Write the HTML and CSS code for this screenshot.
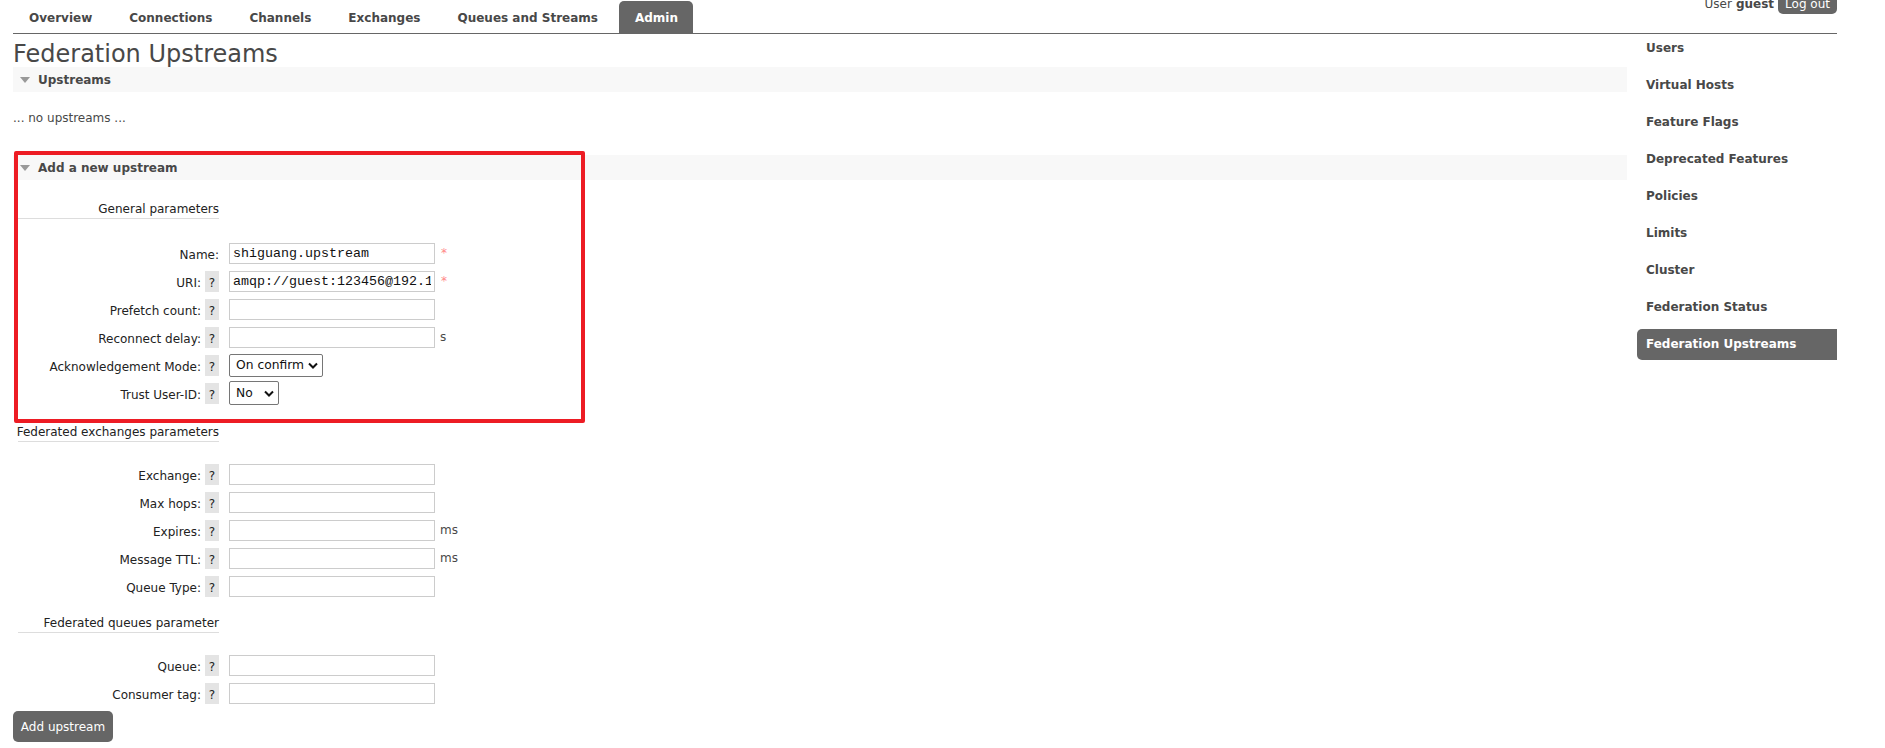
FILE: index.html
```html
<!DOCTYPE html>
<html lang="en">
<head>
    <meta charset="UTF-8">
    <title>RabbitMQ Management: Federation Upstreams</title>
    <link rel="stylesheet" href="styles.css">
</head>
<body>
    <div class="header">
        <ul class="tabs">
            <li><a href="#">Overview</a></li>
            <li><a href="#">Connections</a></li>
            <li><a href="#">Channels</a></li>
            <li><a href="#">Exchanges</a></li>
            <li><a href="#">Queues and Streams</a></li>
            <li class="selected"><a href="#">Admin</a></li>
        </ul>
        <div class="login">
            User <b>guest</b>
            <button class="logout">Log out</button>
        </div>
    </div>

    <div class="main">
        <div class="content">
            <h1>Federation Upstreams</h1>

            <div class="section">
                <h2 class="section-title"><span class="arrow"></span>Upstreams</h2>
                <p class="empty">... no upstreams ...</p>
            </div>

            <div class="section add-section">
                <h2 class="section-title"><span class="arrow"></span>Add a new upstream</h2>

                <form class="form">
                    <div class="group-title first">General parameters</div>

                    <div class="row">
                        <div class="label"><span class="text">Name:</span></div>
                        <input class="field" type="text" value="shiguang.upstream">
                        <span class="mand">*</span>
                    </div>
                    <div class="row">
                        <div class="label"><span class="text">URI:</span><span class="help">?</span></div>
                        <input class="field" type="text" value="amqp://guest:123456@192.168.1.10">
                        <span class="mand">*</span>
                    </div>
                    <div class="row">
                        <div class="label"><span class="text">Prefetch count:</span><span class="help">?</span></div>
                        <input class="field" type="text">
                    </div>
                    <div class="row">
                        <div class="label"><span class="text">Reconnect delay:</span><span class="help">?</span></div>
                        <input class="field" type="text">
                        <span class="unit">s</span>
                    </div>
                    <div class="row">
                        <div class="label"><span class="text">Acknowledgement Mode:</span><span class="help">?</span></div>
                        <span class="select ack">
                            <select class="choice">
                                <option>On confirm</option>
                                <option>On publish</option>
                                <option>No ack</option>
                            </select>
                            <svg class="chevron" width="10" height="7" viewBox="0 0 10 7"><path d="M1 1.5 L5 5.5 L9 1.5" fill="none" stroke="#111" stroke-width="2"/></svg>
                        </span>
                    </div>
                    <div class="row">
                        <div class="label"><span class="text">Trust User-ID:</span><span class="help">?</span></div>
                        <span class="select trust">
                            <select class="choice">
                                <option>No</option>
                                <option>Yes</option>
                            </select>
                            <svg class="chevron" width="10" height="7" viewBox="0 0 10 7"><path d="M1 1.5 L5 5.5 L9 1.5" fill="none" stroke="#111" stroke-width="2"/></svg>
                        </span>
                    </div>

                    <div class="group-title">Federated exchanges parameters</div>

                    <div class="row">
                        <div class="label"><span class="text">Exchange:</span><span class="help">?</span></div>
                        <input class="field" type="text">
                    </div>
                    <div class="row">
                        <div class="label"><span class="text">Max hops:</span><span class="help">?</span></div>
                        <input class="field" type="text">
                    </div>
                    <div class="row">
                        <div class="label"><span class="text">Expires:</span><span class="help">?</span></div>
                        <input class="field" type="text">
                        <span class="unit">ms</span>
                    </div>
                    <div class="row">
                        <div class="label"><span class="text">Message TTL:</span><span class="help">?</span></div>
                        <input class="field" type="text">
                        <span class="unit">ms</span>
                    </div>
                    <div class="row">
                        <div class="label"><span class="text">Queue Type:</span><span class="help">?</span></div>
                        <input class="field" type="text">
                    </div>

                    <div class="group-title last">Federated queues parameter</div>

                    <div class="row">
                        <div class="label"><span class="text">Queue:</span><span class="help">?</span></div>
                        <input class="field" type="text">
                    </div>
                    <div class="row">
                        <div class="label"><span class="text">Consumer tag:</span><span class="help">?</span></div>
                        <input class="field" type="text">
                    </div>

                    <button type="submit" class="submit-btn">Add upstream</button>
                </form>

                <div class="highlight"></div>
            </div>
        </div>

        <ul class="sidebar">
            <li><a href="#">Users</a></li>
            <li><a href="#">Virtual Hosts</a></li>
            <li><a href="#">Feature Flags</a></li>
            <li><a href="#">Deprecated Features</a></li>
            <li><a href="#">Policies</a></li>
            <li><a href="#">Limits</a></li>
            <li><a href="#">Cluster</a></li>
            <li><a href="#">Federation Status</a></li>
            <li class="selected"><a href="#">Federation Upstreams</a></li>
        </ul>
    </div>
</body>
</html>
```

FILE: styles.css
```css
* {
    box-sizing: border-box;
}

body {
    margin: 0;
    padding: 0 48px 0 13px;
    font-family: "DejaVu Sans", Verdana, sans-serif;
    font-size: 12px;
    color: #484848;
    background: #fff;
}

/* top menu */

.header {
    display: flex;
    align-items: flex-start;
    height: 34px;
    border-bottom: 1px solid #666;
}

.tabs {
    display: flex;
    align-self: flex-end;
    list-style: none;
    margin: 0;
    padding: 0;
}

.tabs li {
    margin-right: 6px;
}

.tabs a {
    display: block;
    height: 32px;
    line-height: 35px;
    padding: 0 15px 0 16px;
    font-weight: bold;
    color: #484848;
    text-decoration: none;
}

.tabs .selected a {
    background: #666;
    color: #fff;
    border-radius: 5px 5px 0 0;
}

.login {
    display: flex;
    align-items: center;
    gap: 4px;
    margin-left: auto;
    margin-top: -6px;
    white-space: nowrap;
}

.logout {
    height: 20px;
    padding: 0 7px;
    border: none;
    border-radius: 5px;
    background: #666;
    color: #fff;
    font-family: inherit;
    font-size: 12px;
}

/* layout */

.main {
    display: flex;
    gap: 10px;
}

.content {
    flex: 1;
    min-width: 0;
}

h1 {
    margin: 8px 0 0;
    font-size: 24px;
    font-weight: normal;
    line-height: 25px;
}

.section-title {
    display: flex;
    align-items: center;
    height: 25px;
    margin: 0;
    padding-left: 7px;
    background: #f8f8f8;
    font-size: 12px;
    font-weight: bold;
}

.arrow {
    width: 0;
    height: 0;
    margin-right: 8px;
    border-left: 5px solid transparent;
    border-right: 5px solid transparent;
    border-top: 6px solid #999;
}

.empty {
    margin: 19px 0 30px;
    line-height: 14px;
}

.add-section {
    position: relative;
}

/* form */

.form {
    padding-left: 5px;
}

.group-title {
    display: flex;
    justify-content: flex-end;
    width: 201px;
    margin: 17px 0 18px;
    padding-bottom: 1px;
    line-height: 16px;
    white-space: nowrap;
    border-bottom: 1px solid #ddd;
    color: #222;
}

.group-title.first {
    margin: 21px 0 20px;
}

.group-title.last {
    margin-top: 15px;
}

.row {
    display: flex;
    align-items: center;
    height: 28px;
}

.label {
    display: flex;
    align-items: center;
    justify-content: flex-end;
    width: 201px;
    color: #222;
}

.label .text {
    padding-top: 4px;
}

.help {
    width: 14px;
    height: 21px;
    margin-left: 4px;
    padding-top: 3px;
    line-height: 18px;
    text-align: center;
    background: #e4e4e4;
}

.field {
    width: 206px;
    height: 21px;
    margin: 0 0 0 10px;
    padding: 0 3px;
    border: 1px solid #ccc;
    font-family: "Liberation Mono", "Courier New", monospace;
    font-size: 13.33px;
    color: #111;
}

.mand {
    align-self: flex-start;
    margin: 8px 0 0 6px;
    line-height: 12px;
    color: #f88;
}

.unit {
    margin-left: 5px;
}

.select {
    position: relative;
    display: inline-flex;
    margin-left: 10px;
}

.choice {
    appearance: none;
    width: 100%;
    height: 100%;
    margin: 0;
    padding: 0 0 0 6px;
    border: 1px solid #767676;
    border-radius: 2px;
    background: #fff;
    font-family: "DejaVu Sans", Verdana, sans-serif;
    font-size: 12.3px;
    color: #111;
}

.select.ack {
    width: 94px;
    height: 23px;
}

.select.trust {
    width: 50px;
    height: 24px;
}

.chevron {
    position: absolute;
    right: 5px;
    top: 50%;
    margin-top: -3px;
    pointer-events: none;
}

.submit-btn {
    display: block;
    width: 100px;
    height: 31px;
    margin-top: 4px;
    margin-left: -5px;
    border: none;
    border-radius: 5px;
    background: #666;
    color: #fff;
    font-family: inherit;
    font-size: 12px;
}

/* screenshot annotation */

.highlight {
    position: absolute;
    left: 1px;
    top: -4px;
    width: 571px;
    height: 272px;
    border: 4px solid #ed1c24;
    border-radius: 2px;
    pointer-events: none;
}

/* admin side menu */

.sidebar {
    width: 200px;
    flex-shrink: 0;
    list-style: none;
    margin: -1px 0 0;
    padding: 0;
}

.sidebar li {
    margin-bottom: 6px;
}

.sidebar a {
    display: block;
    height: 31px;
    line-height: 31px;
    padding-left: 9px;
    font-weight: bold;
    color: #484848;
    text-decoration: none;
}

.sidebar .selected a {
    background: #666;
    color: #fff;
    border-radius: 5px 0 0 5px;
}
```
